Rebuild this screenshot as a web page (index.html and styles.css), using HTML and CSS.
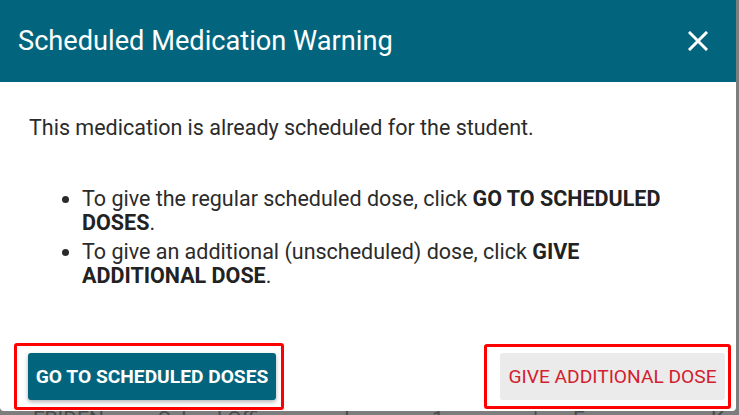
FILE: index.html
```html
<!DOCTYPE html>
<html lang="en">
<head>
<meta charset="utf-8">
<title>Scheduled Medication Warning</title>
<link rel="stylesheet" href="styles.css">
</head>
<body>
<div class="backdrop-page">
  <div class="bg-row">
    <span class="c1">FRIDEN</span>
    <span class="c2">School Office</span>
    <span class="c3">each</span>
    <span class="c4">1</span>
    <span class="c5">|</span>
    <span class="c6">E</span>
    <span class="c7">Kool</span>
  </div>
</div>
<div class="dialog" role="dialog" aria-labelledby="dlg-title">
  <header class="dialog-header">
    <h1 id="dlg-title" class="dialog-title">Scheduled Medication Warning</h1>
    <button class="close-btn" aria-label="Close">
      <svg width="20" height="20" viewBox="0 0 20 20"><path d="M2 2 L18 18 M18 2 L2 18" stroke="#fff" stroke-width="3" stroke-linecap="square"/></svg>
    </button>
  </header>
  <div class="dialog-body">
    <p class="intro">This medication is already scheduled for the student.</p>
    <ul class="options">
      <li>To give the regular scheduled dose, click <strong>GO TO SCHEDULED DOSES</strong>.</li>
      <li>To give an additional (unscheduled) dose, click <strong>GIVE ADDITIONAL DOSE</strong>.</li>
    </ul>
  </div>
  <footer class="dialog-actions">
    <div class="highlight highlight-left">
      <button class="btn btn-primary">GO TO SCHEDULED DOSES</button>
    </div>
    <div class="highlight highlight-right">
      <button class="btn btn-secondary">GIVE ADDITIONAL DOSE</button>
    </div>
  </footer>
</div>
</body>
</html>
```
FILE: styles.css
```css
* { box-sizing: border-box; }
html, body { margin: 0; padding: 0; }
body {
  width: 739px;
  height: 415px;
  overflow: hidden;
  background: #7d7d7d;
  font-family: Roboto, "Liberation Sans", sans-serif;
  position: relative;
}
.backdrop-page {
  padding-top: 407px;
}
.bg-row {
  display: flex;
  font-size: 21px;
  color: #4a4a4a;
  height: 24px;
  line-height: 24px;
  white-space: nowrap;
}
.bg-row span { display: block; }
.c1 { margin-left: 33px; width: 125px; }
.c2 { width: 153px; }
.c3 { width: 121px; }
.c4 { width: 101px; }
.c5 { width: 40px; }
.c6 { width: 60px; }
.c7 { margin-left: auto; margin-right: -14px; }

.dialog {
  position: absolute;
  top: 0;
  left: 0;
  width: 736px;
  height: 411px;
  background: #fff;
  border-radius: 0 0 4px 4px;
  display: flex;
  flex-direction: column;
}
.dialog-header {
  height: 82px;
  background: #03657d;
  display: flex;
  align-items: center;
  padding: 0 28px 0 18px;
}
.dialog-title {
  margin: 0;
  flex: 1;
  font-weight: 400;
  font-size: 27.2px;
  color: #fff;
  letter-spacing: 0;
}
.close-btn {
  background: none;
  border: 0;
  padding: 0;
  width: 20px;
  height: 20px;
  display: flex;
}
.dialog-body {
  flex: 1;
  padding: 34px 36px 0 29px;
  color: #2b2b2b;
  font-size: 21.5px;
  line-height: 24px;
}
.intro { margin: 0 0 47px; }
.options {
  margin: 0;
  padding-left: 53px;
}
.options li { margin-bottom: 5px; }
.options strong { font-weight: 700; color: #222; }

.dialog-actions {
  display: flex;
  justify-content: space-between;
  padding: 0 5px 1px 14px;
  height: 68px;
}
.highlight {
  border: 3px solid #ff0000;
  border-radius: 3px;
  display: flex;
}
.highlight-left { padding: 7px 5px 8px 11px; }
.highlight-right { padding: 6px 3px 6px 13px; height: 65px; margin-top: 1px; }
.btn {
  border: 0;
  font-family: Roboto, "Liberation Sans", sans-serif;
  font-size: 19.2px;
  height: 47px;
  border-radius: 3px;
  cursor: pointer;
  padding: 0;
  white-space: nowrap;
}
.btn-primary {
  width: 248px;
  background: #03657d;
  color: #fff;
  font-weight: 700;
  box-shadow: 0 2px 4px rgba(0,0,0,0.3);
}
.btn-secondary {
  width: 225px;
  background: #ebebeb;
  color: #d3202f;
  font-weight: 400;
}
```
